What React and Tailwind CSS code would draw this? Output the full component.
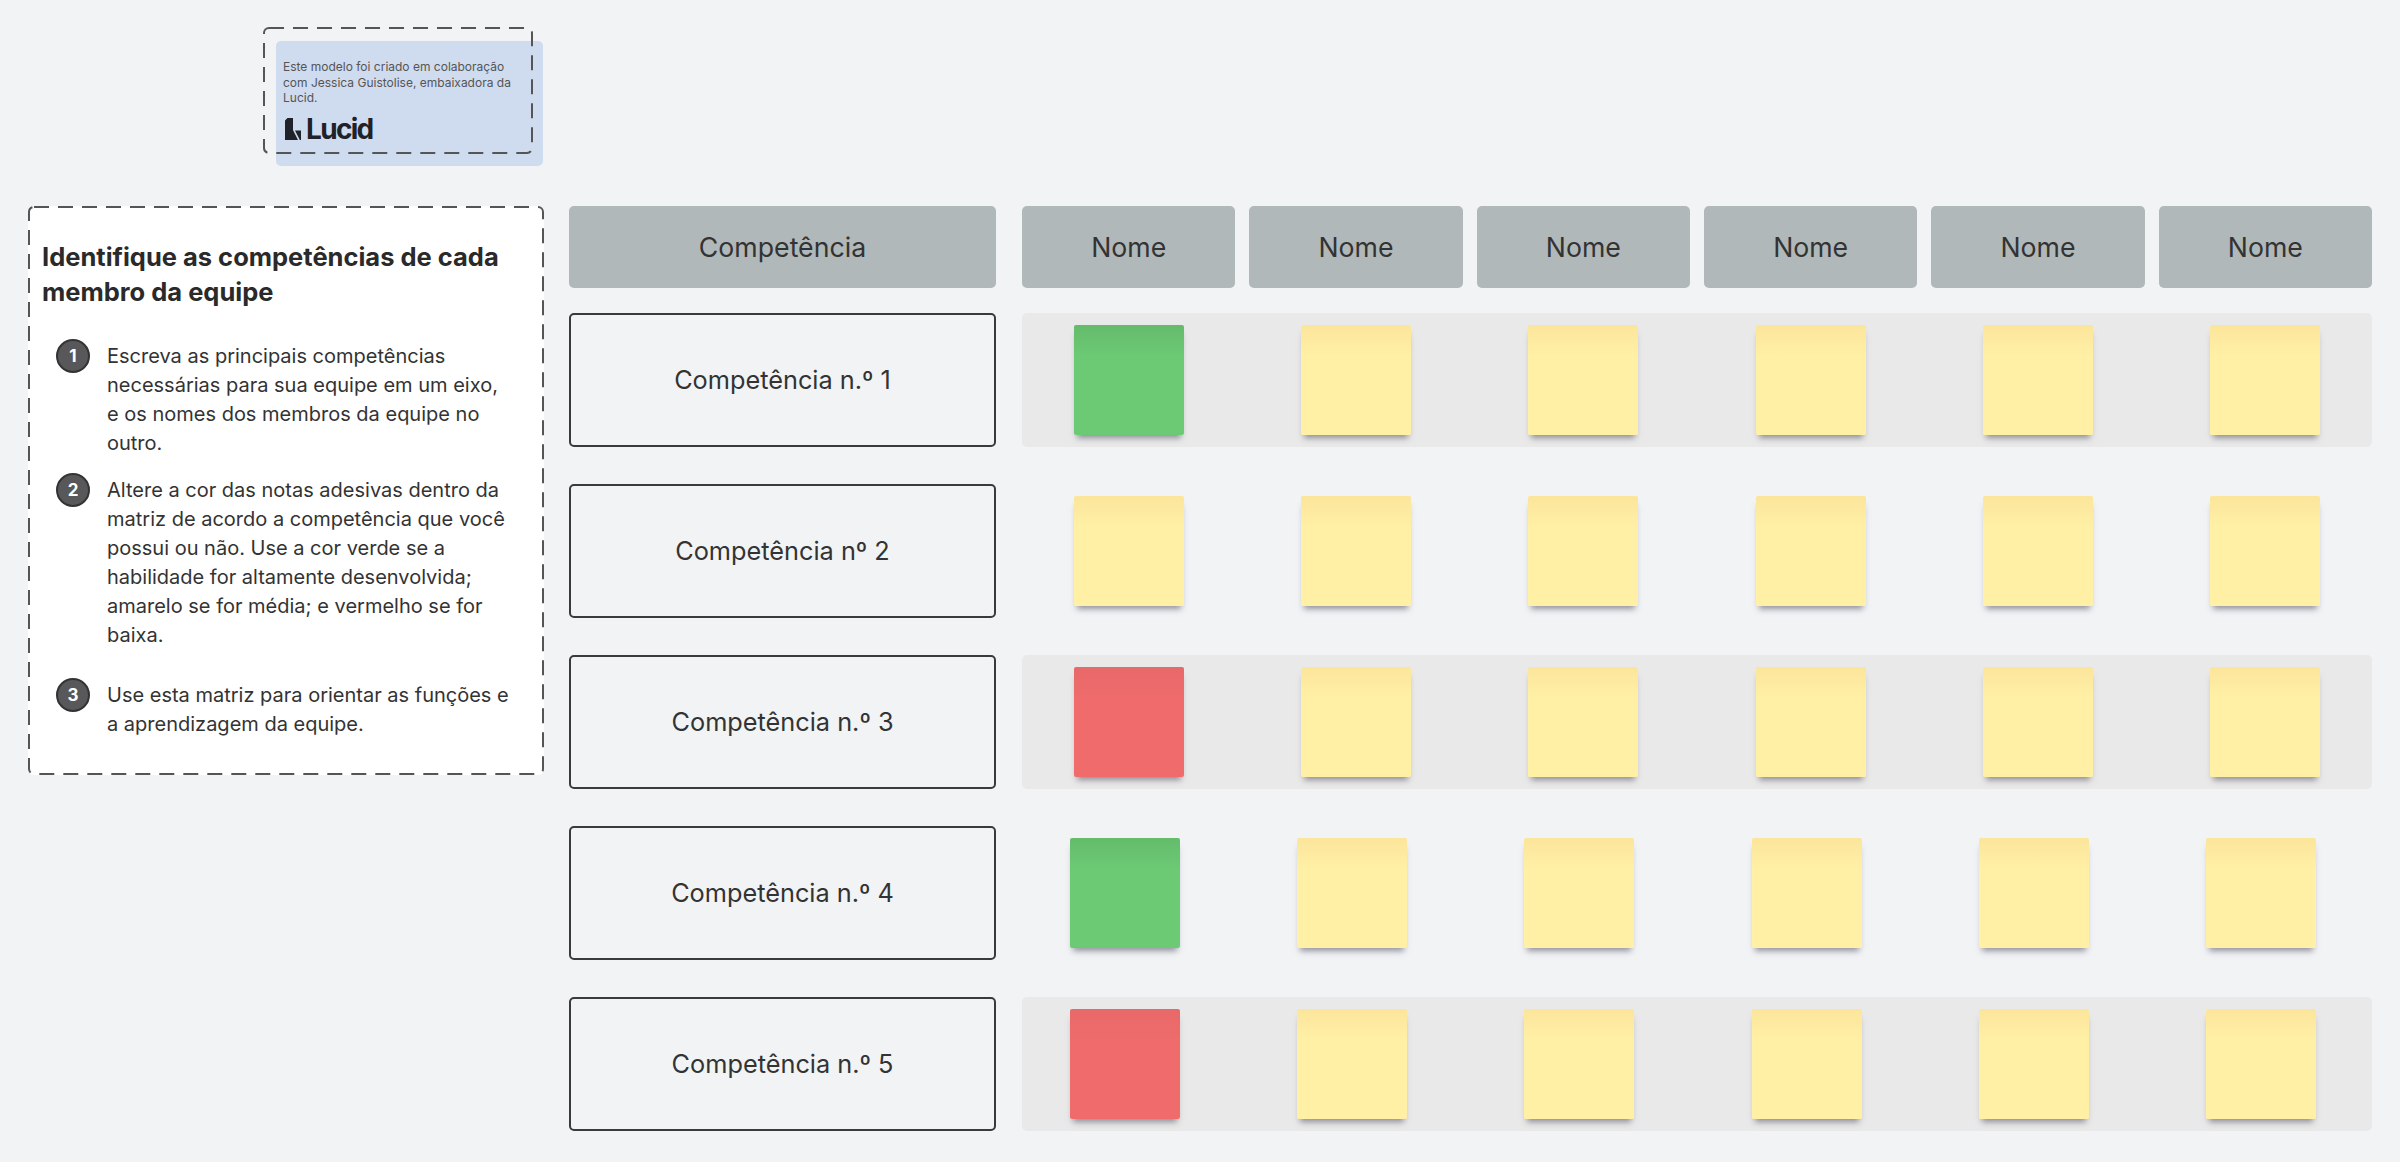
import React from "react";

const YELLOW = "bg-[linear-gradient(to_bottom,#fbe59b,#fff0a6_28%)]";
const GREEN = "bg-[linear-gradient(to_bottom,#64bc6b,#6cc974_28%)]";
const RED = "bg-[linear-gradient(to_bottom,#e86969,#ef6b6c_28%)]";

const rows = [
  { label: "Competência n.º 1", colors: ["g", "y", "y", "y", "y", "y"], bg: true, shift: false },
  { label: "Competência nº 2", colors: ["y", "y", "y", "y", "y", "y"], bg: false, shift: false },
  { label: "Competência n.º 3", colors: ["r", "y", "y", "y", "y", "y"], bg: true, shift: false },
  { label: "Competência n.º 4", colors: ["g", "y", "y", "y", "y", "y"], bg: false, shift: true },
  { label: "Competência n.º 5", colors: ["r", "y", "y", "y", "y", "y"], bg: true, shift: true },
];

function Note({ c, shift }) {
  const color = c === "g" ? GREEN : c === "r" ? RED : YELLOW;
  return (
    <div
      className={
        "w-[110px] h-[110px] rounded-[2px] shadow-[0_6px_6px_-3px_rgba(50,50,70,0.5)] " +
        color +
        (shift ? " mr-[8px]" : "")
      }
    />
  );
}

function DashedBox({ w, h }) {
  return (
    <svg
      className="absolute left-0 top-0 pointer-events-none"
      width={w}
      height={h}
      viewBox={`0 0 ${w} ${h}`}
    >
      <rect
        x="1"
        y="1"
        width={w - 2}
        height={h - 2}
        rx="5"
        fill="none"
        stroke="#555"
        strokeWidth="2"
        strokeDasharray="15 9"
      />
    </svg>
  );
}

function Step({ n, lines, className }) {
  return (
    <div className={"flex items-start " + (className || "")}>
      <div className="ml-[14px] mt-[-3px] w-[34px] h-[34px] shrink-0 rounded-full bg-[#58585a] border-[2.5px] border-[#333] flex items-center justify-center text-white font-bold text-[17px] leading-none">
        {n}
      </div>
      <p className="ml-[17px] text-[20px] leading-[29px] text-[#333]">
        {lines.map((l, i) => (
          <React.Fragment key={i}>
            {l}
            {i < lines.length - 1 && <br />}
          </React.Fragment>
        ))}
      </p>
    </div>
  );
}

export default function App() {
  return (
    <div className="w-[2400px] h-[1162px] bg-[#f2f3f5] overflow-hidden font-['Inter','Noto_Sans',sans-serif]">
      {/* Lucid attribution card */}
      <div className="pt-[27px] pl-[263px]">
        <div className="relative w-[281px] h-[139px] pl-[13px] pt-[14px]">
          <div className="w-[267px] h-[125px] bg-[#cfdcef] rounded-[5px] pl-[7px] pt-[18px]">
            <p className="text-[12px] leading-[15.5px] text-[#555]">
              Este modelo foi criado em colaboração
              <br />
              com Jessica Guistolise, embaixadora da
              <br />
              Lucid.
            </p>
            <div className="mt-[11px] flex items-center h-[24px] pl-[2px]">
              <svg width="16" height="22" viewBox="0 0 16 22" className="mr-[5px]">
                <polygon points="0,2.5 2.5,0 8,0 8,12 13,22 0,22" fill="#1f2329" />
                <polygon points="10,12.5 16,12.5 16,22 14.8,22" fill="#1f2329" />
              </svg>
              <span className="text-[28px] font-bold tracking-[-0.06em] text-[#1f2329] leading-none">
                Lucid
              </span>
            </div>
          </div>
          <DashedBox w={270} h={127} />
        </div>
      </div>

      {/* Main area */}
      <div className="mt-[40px] flex items-start">
        {/* Instructions panel */}
        <div className="relative ml-[28px] w-[516px] h-[569px] bg-white rounded-[6px] pl-[14px] pt-[33px]">
          <h1 className="text-[25.5px] leading-[35px] font-bold text-[#2a2a2a]">
            Identifique as competências de cada
            <br />
            membro da equipe
          </h1>
          <div className="mt-[33px]">
            <Step
              n="1"
              lines={[
                "Escreva as principais competências",
                "necessárias para sua equipe em um eixo,",
                "e os nomes dos membros da equipe no",
                "outro.",
              ]}
            />
            <Step
              n="2"
              className="mt-[18px]"
              lines={[
                "Altere a cor das notas adesivas dentro da",
                "matriz de acordo a competência que você",
                "possui ou não. Use a cor verde se a",
                "habilidade for altamente desenvolvida;",
                "amarelo se for média; e vermelho se for",
                "baixa.",
              ]}
            />
            <Step
              n="3"
              className="mt-[31px]"
              lines={["Use esta matriz para orientar as funções e", "a aprendizagem da equipe."]}
            />
          </div>
          <DashedBox w={516} h={569} />
        </div>

        {/* Matrix */}
        <div className="ml-[25px] flex flex-col">
          <div className="flex h-[82px]">
            <div className="w-[427px] bg-[#b1b8b9] rounded-[5px] flex items-center justify-center text-[26.7px] text-[#333]">
              Competência
            </div>
            <div className="ml-[26px] w-[1350px] grid grid-cols-6 gap-x-[14px]">
              {[0, 1, 2, 3, 4, 5].map((i) => (
                <div
                  key={i}
                  className="bg-[#b1b8b9] rounded-[5px] flex items-center justify-center text-[26.7px] text-[#333]"
                >
                  Nome
                </div>
              ))}
            </div>
          </div>

          <div className="mt-[25px] flex flex-col gap-y-[37px]">
            {rows.map((r, ri) => (
              <div key={ri} className="flex h-[134px]">
                <div className="w-[427px] border-2 border-[#3a3a3a] rounded-[5px] flex items-center justify-center text-[25.3px] text-[#333]">
                  {r.label}
                </div>
                <div
                  className={
                    "ml-[26px] w-[1350px] grid grid-cols-6 gap-x-[14px] rounded-[5px] " +
                    (r.bg ? "bg-[#e9e9e9]" : "")
                  }
                >
                  {r.colors.map((c, ci) => (
                    <div key={ci} className="flex items-center justify-center">
                      <Note c={c} shift={r.shift} />
                    </div>
                  ))}
                </div>
              </div>
            ))}
          </div>
        </div>
      </div>
    </div>
  );
}
